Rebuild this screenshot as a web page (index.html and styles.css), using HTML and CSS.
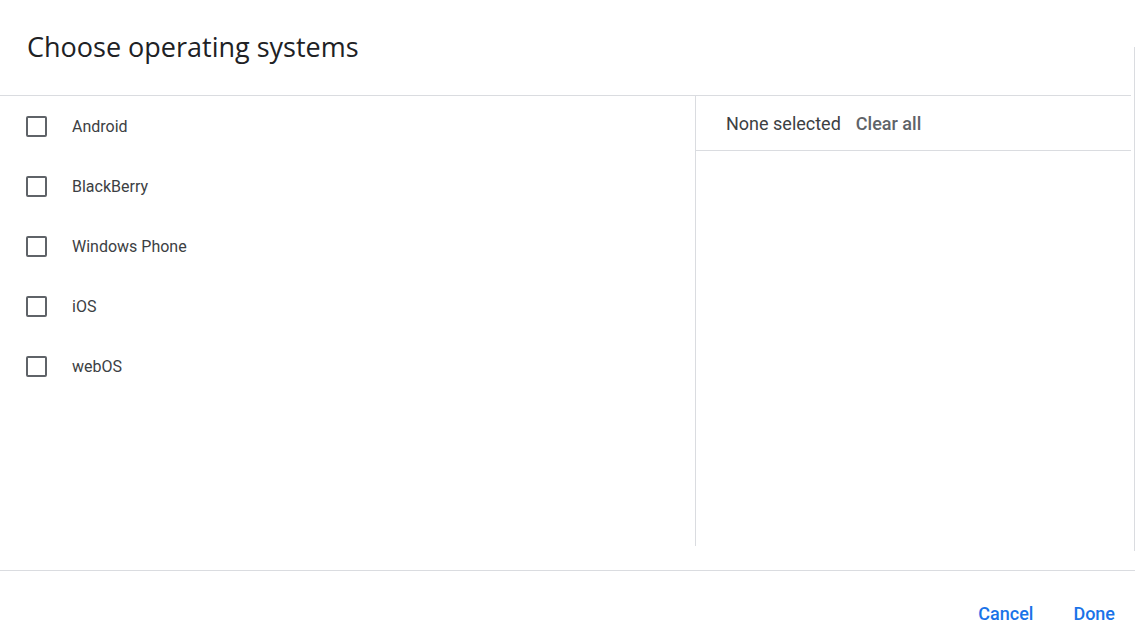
FILE: index.html
```html
<!DOCTYPE html>
<html lang="en">
<head>
    <meta charset="UTF-8">
    <title>Choose operating systems</title>
    <link rel="stylesheet" href="styles.css">
</head>
<body>

    <div class="dialog">
        <div class="sheet">
            <div class="main">
                <div class="dialog-header">
                    <h1>Choose operating systems</h1>
                </div>
                <div class="picker">
                    <ul class="options">
                        <li><span class="checkbox"></span>Android</li>
                        <li><span class="checkbox"></span>BlackBerry</li>
                        <li><span class="checkbox"></span>Windows Phone</li>
                        <li><span class="checkbox"></span>iOS</li>
                        <li><span class="checkbox"></span>webOS</li>
                    </ul>
                    <div class="selected">
                        <div class="selected-header">
                            <span class="count">None selected</span>
                            <span class="clear">Clear all</span>
                        </div>
                    </div>
                </div>
            </div>
            <div class="rail"><div class="rail-line"></div></div>
        </div>

        <div class="dialog-footer">
            <button class="btn">Cancel</button>
            <button class="btn">Done</button>
        </div>
    </div>

</body>
</html>
```

FILE: styles.css
```css
/* Basic reset */
* {
    margin: 0;
    padding: 0;
    box-sizing: border-box;
}

body {
    font-family: 'Roboto', 'Liberation Sans', sans-serif;
    background: #fff;
    color: #3c4043;
}

.dialog {
    width: 1135px;
    height: 634px;
    display: flex;
    flex-direction: column;
}

.sheet {
    display: flex;
    height: 570px;
}

.main {
    flex: 1;
    display: flex;
    flex-direction: column;
}

/* thin line on the right edge */
.rail {
    width: 4px;
    padding-top: 47px;
    display: flex;
    justify-content: flex-end;
}

.rail-line {
    width: 1px;
    height: 504px;
    background: #dadce0;
}

.dialog-header {
    height: 96px;
    border-bottom: 1px solid #dadce0;
    padding: 30px 0 0 27px;
}

.dialog-header h1 {
    font-family: 'Open Sans', 'Roboto', sans-serif;
    font-size: 27px;
    font-weight: 400;
    line-height: 34px;
    color: #202124;
}

.picker {
    display: flex;
    height: 450px;
}

.options {
    list-style: none;
    width: 696px;
    border-right: 1px solid #dadce0;
}

.options li {
    display: flex;
    align-items: center;
    height: 60px;
    font-size: 16px;
    color: #3c4043;
    padding-left: 26px;
}

.checkbox {
    width: 21px;
    height: 21px;
    border: 2px solid #5f6368;
    border-radius: 2px;
    margin-right: 25px;
    flex-shrink: 0;
}

.selected {
    flex: 1;
}

.selected-header {
    height: 55px;
    border-bottom: 1px solid #dadce0;
    display: flex;
    align-items: center;
    padding-left: 30px;
    gap: 15px;
    font-size: 18px;
}

.count {
    color: #3c4043;
}

.clear {
    color: #5f6368;
    font-weight: 500;
}

.dialog-footer {
    border-top: 1px solid #dadce0;
    flex: 1;
    display: flex;
    justify-content: flex-end;
    align-items: center;
    padding-right: 20px;
    gap: 40px;
}

.btn {
    background: none;
    border: none;
    font-family: 'Roboto', 'Liberation Sans', sans-serif;
    font-size: 18px;
    font-weight: 500;
    color: #1a73e8;
    cursor: pointer;
    padding-top: 22px;
}
```
